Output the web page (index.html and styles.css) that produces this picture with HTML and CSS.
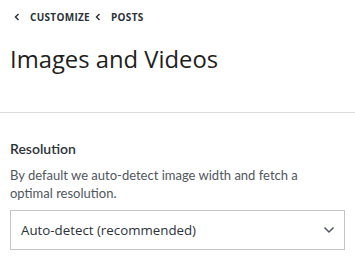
FILE: index.html
```html
<!DOCTYPE html>
<html lang="en">
<head>
  <meta charset="UTF-8">
  <meta name="viewport" content="width=device-width, initial-scale=1.0">
  <title>Images and Videos</title>
  <link rel="stylesheet" href="styles.css">
</head>
<body>
  <div class="crumbs">
    <span class="crumb">
      <svg class="chev" width="6" height="8" viewBox="0 0 6 8"><path d="M4.5 1 L1.5 4 L4.5 7" fill="none" stroke="#2c3338" stroke-width="1.5"/></svg>
      Customize
    </span>
    <span class="crumb">
      <svg class="chev" width="6" height="8" viewBox="0 0 6 8"><path d="M4.5 1 L1.5 4 L4.5 7" fill="none" stroke="#2c3338" stroke-width="1.5"/></svg>
      Posts
    </span>
  </div>
  <h1 class="title">Images and Videos</h1>
  <hr class="divider">
  <div class="field">
    <div class="label">Resolution</div>
    <p class="help">By default we auto-detect image width and fetch a optimal resolution.</p>
    <div class="select">
      <span>Auto-detect (recommended)</span>
      <svg width="12" height="8" viewBox="0 0 12 8"><path d="M1.5 1.5 L6 6 L10.5 1.5" fill="none" stroke="#50575e" stroke-width="1.5"/></svg>
    </div>
  </div>
</body>
</html>
```

FILE: styles.css
```css
body {
  margin: 0;
  font-family: "Open Sans", sans-serif;
  color: #1e1e1e;
  background: #fff;
}
.crumbs {
  display: flex;
  gap: 5px;
  padding: 10px 0 0 14px;
  height: 14px;
  align-items: center;
}
.crumb {
  display: flex;
  align-items: center;
  gap: 10px;
  font-size: 10px;
  font-weight: 700;
  text-transform: uppercase;
  color: #2c3338;
  letter-spacing: 0.3px;
}
.title {
  margin: 0;
  padding: 20px 10px 0;
  font-size: 23.8px;
  font-weight: 400;
  line-height: 30px;
  color: #1e1e1e;
}
.divider {
  margin: 38px 0 0;
  border: 0;
  border-top: 1px solid #dcdcde;
}
.field {
  padding: 27px 10px 0;
}
.label {
  font-family: Lato, sans-serif;
  font-size: 14px;
  font-weight: 600;
  line-height: 18px;
  color: #2c3338;
}
.help {
  margin: 8px 0 0;
  max-width: 300px;
  font-family: Lato, sans-serif;
  font-size: 13px;
  line-height: 18px;
  color: #50575e;
}
.select {
  margin-top: 8px;
  height: 38px;
  border: 1px solid #c3c4c7;
  display: flex;
  align-items: center;
  justify-content: space-between;
  padding: 0 9px 0 10px;
  font-size: 13.3px;
  color: #2c3338;
}
```
